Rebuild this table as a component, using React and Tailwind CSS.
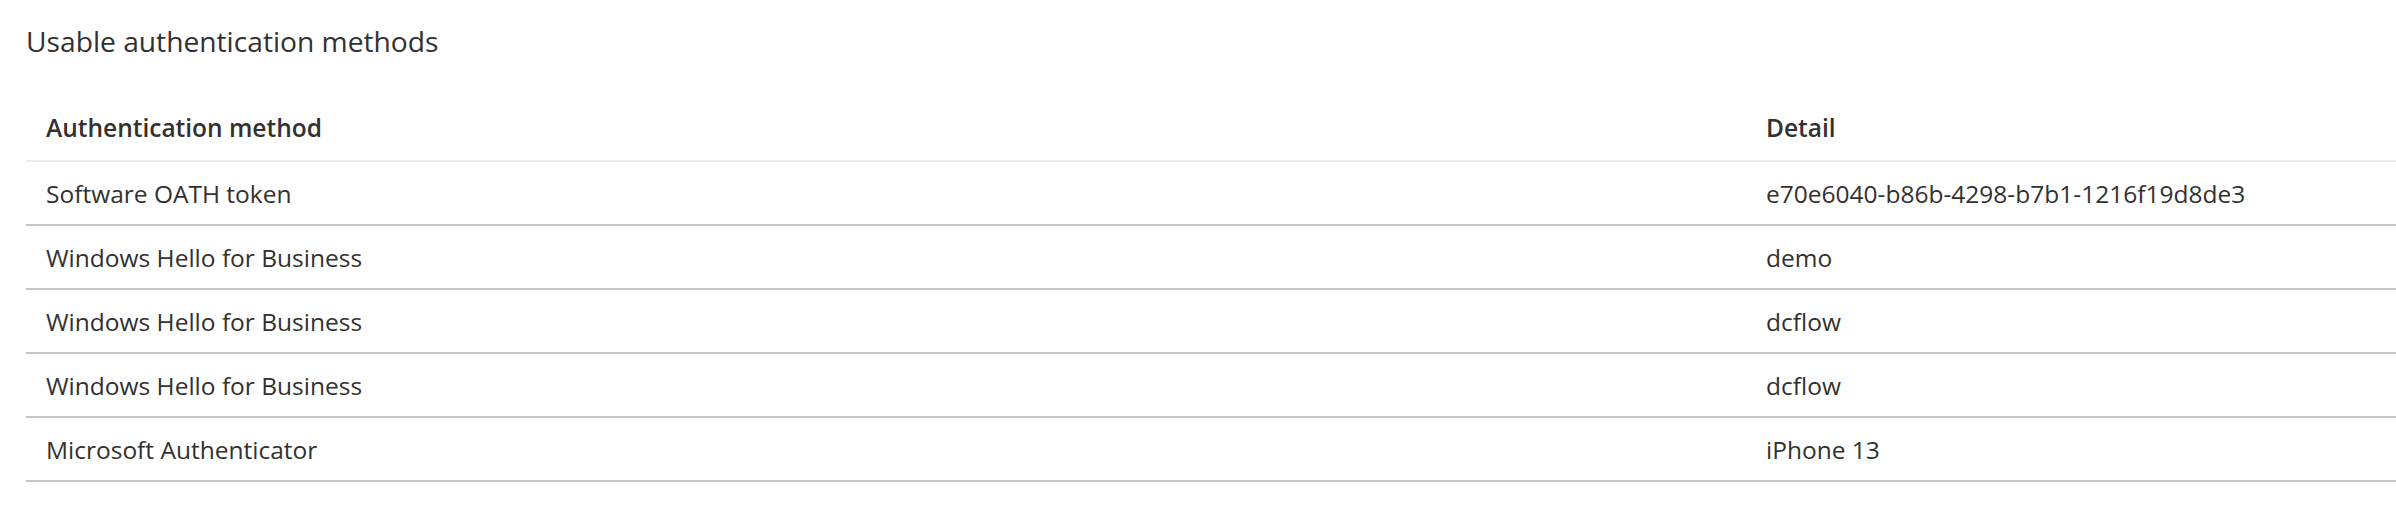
export default function App() {
  const rows = [
    ["Software OATH token", "e70e6040-b86b-4298-b7b1-1216f19d8de3"],
    ["Windows Hello for Business", "demo"],
    ["Windows Hello for Business", "dcflow"],
    ["Windows Hello for Business", "dcflow"],
    ["Microsoft Authenticator", "iPhone 13"],
  ];
  return (
    <div
      className="w-[2396px] h-[508px] bg-white pl-[26px] pt-[23px] text-[#323130] overflow-hidden"
      style={{ fontFamily: '"Open Sans", "Noto Sans", sans-serif' }}
    >
      <div className="text-[28.2px] leading-[36px] h-[36px] mb-[35px]">Usable authentication methods</div>
      <div className="w-full">
        <div className="grid grid-cols-[1720px_1fr] h-[64px] pt-[2px] border-b-2 border-[#edebe9] box-content">
          <div className="flex items-center pl-[20px] text-[24.5px] leading-[32px] font-semibold">Authentication method</div>
          <div className="flex items-center pl-[20px] text-[24.5px] leading-[32px] font-semibold">Detail</div>
        </div>
        {rows.map((r, i) => (
          <div key={i} className="grid grid-cols-[1720px_1fr] h-[64px] pt-[2px] border-b-2 border-[#c8c6c4]">
            <div className="flex items-center pl-[20px] text-[24.5px] leading-[32px]">{r[0]}</div>
            <div className="flex items-center pl-[20px] text-[24.5px] leading-[32px]">{r[1]}</div>
          </div>
        ))}
      </div>
    </div>
  );
}
